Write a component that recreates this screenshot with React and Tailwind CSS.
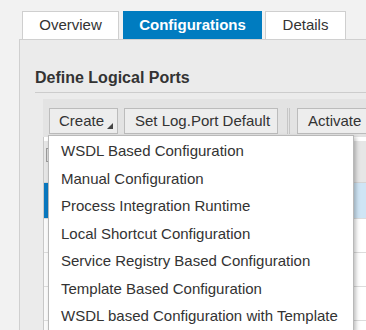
import React from "react";

const menuItems = [
  "WSDL Based Configuration",
  "Manual Configuration",
  "Process Integration Runtime",
  "Local Shortcut Configuration",
  "Service Registry Based Configuration",
  "Template Based Configuration",
  "WSDL based Configuration with Template",
];

const Row = ({ selected = false, height = "h-[34px]" }) => (
  <div className={`flex ${height} border-b border-[#dcdcdc]`}>
    <div
      className={`w-[30px] shrink-0 border-r border-[#d8d8d8] ${
        selected ? "bg-[#0a78bf]" : "bg-[#fafafa]"
      }`}
    />
    <div className={`flex-1 ${selected ? "bg-[#cfe5f5]" : "bg-white"}`} />
  </div>
);

export default function App() {
  return (
    <div className="w-[366px] h-[330px] overflow-hidden bg-[#f2f2f2] font-['Liberation_Sans',Arial,sans-serif] text-[15px] text-[#333]">
      {/* tabs */}
      <div className="flex pl-[22px] pt-[11px]">
        <div className="w-[97px] h-[28px] flex items-center justify-center bg-white border border-b-0 border-[#cfcfcf]">
          Overview
        </div>
        <div className="ml-[4px] w-[139px] h-[28px] flex items-center justify-center bg-[#007cc0] text-white font-bold">
          Configurations
        </div>
        <div className="ml-[3px] w-[81px] h-[28px] flex items-center justify-center bg-white border border-b-0 border-[#cfcfcf]">
          Details
        </div>
      </div>

      {/* panel */}
      <div className="ml-[19px] h-[300px] border-l border-t border-[#d0d0d0] bg-[#ebebeb]">
        <div className="ml-[15px] pt-[29px] pb-[5px] border-b border-[#cccccc] text-[16px] leading-[18px] font-bold text-[#333]">
          Define Logical Ports
        </div>

        <div className="relative ml-[23px] mt-[6px]">
          {/* toolbar */}
          <div className="flex items-center bg-[#e3e3e3] pt-[9px] pb-[3px] pl-[6px] whitespace-nowrap">
            <div className="relative w-[69px] h-[26px] shrink-0 flex items-center pl-[9px] bg-[#ededed] border border-[#bcbcbc]">
              Create
              <svg
                className="absolute right-[4px] bottom-[4px]"
                width="6"
                height="6"
                viewBox="0 0 6 6"
              >
                <path d="M6 0 L6 6 L0 6 Z" fill="#444" />
              </svg>
            </div>
            <div className="ml-[6px] w-[154px] h-[26px] shrink-0 flex items-center pl-[10px] bg-[#ededed] border border-[#bcbcbc]">
              Set Log.Port Default
            </div>
            <div className="ml-[9px] w-px h-[26px] shrink-0 bg-[#c6c6c6]" />
            <div className="ml-px w-px h-[26px] shrink-0 bg-[#c6c6c6]" />
            <div className="ml-[7px] w-[80px] h-[26px] shrink-0 flex items-center pl-[10px] bg-[#ededed] border border-[#bcbcbc]">
              Activate
            </div>
          </div>

          {/* table behind the menu */}
          <div className="border-l border-[#c8c8c8]">
            <div className="h-[4px] bg-white" />
            <div className="flex h-[42px] border-b border-[#d4d4d4] bg-[#e6e6e6]">
              <div className="w-[30px] shrink-0 pt-[7px] pl-[2px] border-r border-[#d0d0d0]">
                <div className="w-[12px] h-[14px] border border-[#9a9a9a] bg-[#dcdcdc]" />
              </div>
              <div className="flex-1" />
            </div>
            <Row selected height="h-[36px]" />
            <Row />
            <Row />
            <Row />
            <Row />
          </div>

          {/* dropdown menu */}
          <div className="absolute left-[5px] top-[36px] w-[306px] pt-[1.5px] bg-white border border-[#b9b9b9] shadow-[2px_2px_4px_rgba(0,0,0,0.25)]">
            {menuItems.map((item) => (
              <div
                key={item}
                className="h-[27.5px] flex items-center pl-[12px] whitespace-nowrap text-[#333]"
              >
                {item}
              </div>
            ))}
          </div>
        </div>
      </div>
    </div>
  );
}
